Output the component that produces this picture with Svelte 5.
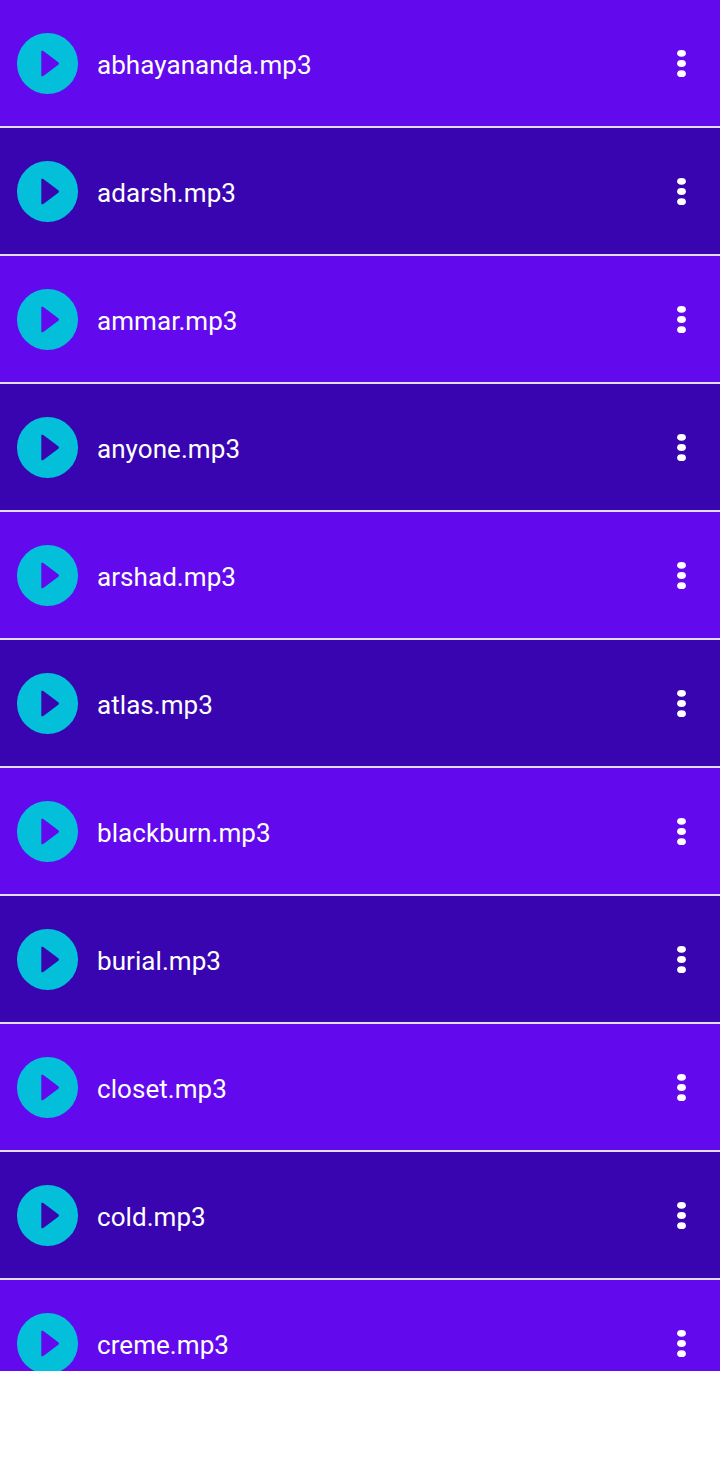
<script>
  // Songs found on the device
  const songs = [
    "abhayananda.mp3",
    "adarsh.mp3",
    "ammar.mp3",
    "anyone.mp3",
    "arshad.mp3",
    "atlas.mp3",
    "blackburn.mp3",
    "burial.mp3",
    "closet.mp3",
    "cold.mp3",
    "creme.mp3",
  ];
</script>

<main class="song-list">
  {#each songs as song (song)}
    <div class="song">
      <svg class="play" viewBox="0 0 61 61">
        <path
          fill-rule="evenodd"
          d="M30.5 0a30.5 30.5 0 1 0 0 61a30.5 30.5 0 1 0 0-61zM24.3 19c0-1.3 1-1.6 2-.9l15 11.2c.8.7.8 1.7 0 2.4l-15 11.2c-1 .7-2 .4-2-.9z"
        />
      </svg>
      <span class="name">{song}</span>
      <svg class="menu" viewBox="0 0 9 29">
        <ellipse cx="4.5" cy="4.3" rx="4.4" ry="3.4" />
        <ellipse cx="4.5" cy="14.5" rx="4.4" ry="3.4" />
        <ellipse cx="4.5" cy="24.7" rx="4.4" ry="3.4" />
      </svg>
    </div>
  {/each}
</main>

<style>
  :global(body) {
    background-color: #fff;
  }

  .song-list {
    height: 1371px;
    overflow: hidden;
    font-family: Roboto, sans-serif;
  }

  .song {
    box-sizing: border-box;
    height: 128px;
    padding: 0 34px 0 17px;
    display: flex;
    align-items: center;
    background-color: #6209ed;
    border-bottom: 2px solid #e6dcf8;
  }

  .song:nth-child(even) {
    background-color: #3905b1;
  }

  .play {
    width: 61px;
    height: 61px;
    fill: #03bfda;
  }

  .name {
    flex: 1;
    margin-left: 19px;
    padding-top: 4px;
    color: #fff;
    font-size: 26px;
    line-height: 30px;
    letter-spacing: 0.06px;
  }

  .menu {
    width: 9px;
    height: 29px;
    fill: #fff;
  }
</style>
